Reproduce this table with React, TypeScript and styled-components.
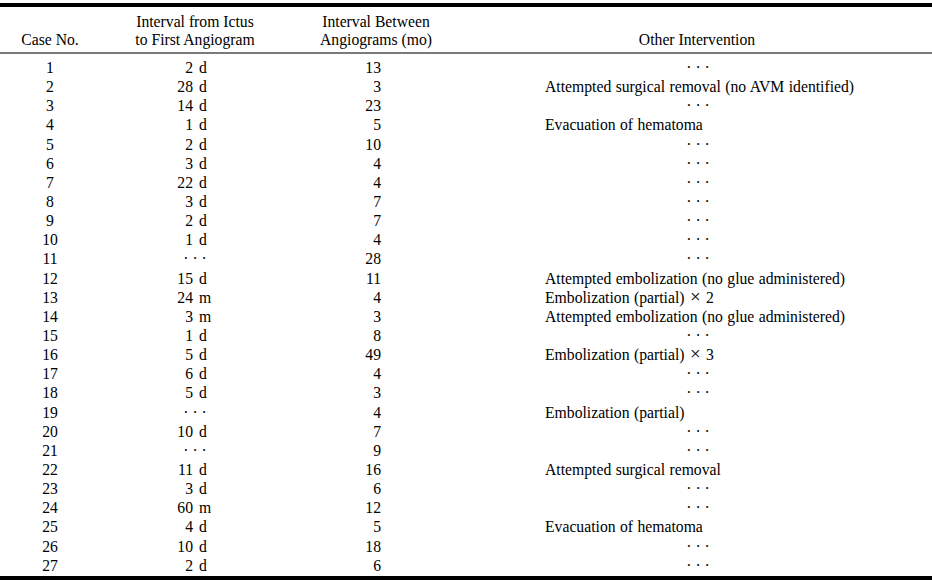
import React from "react";
import styled, { createGlobalStyle } from "styled-components";

const Global = createGlobalStyle`
  html, body { margin: 0; padding: 0; background: #fff; }
  body { font-family: "Liberation Serif", "Times New Roman", serif; color: #000; }
`;

const COLS = "100px 190px 172px 1fr";

const Page = styled.div`
  width: 932px;
  padding-top: 3px;
  font-size: 15.7px;
`;

const ThickRule = styled.div`
  height: 4px;
  background: #000;
`;

const HeadRule = styled.div`
  height: 2px;
  background: #7a7a7a;
`;

const HeaderRow = styled.div`
  display: grid;
  grid-template-columns: ${COLS};
  padding: 6px 0 3px;
  line-height: 18px;
`;

const HeaderCell = styled.div`
  text-align: center;
  align-self: end;
`;

const Body = styled.div`
  padding: 4px 0 1px;
`;

const Row = styled.div`
  display: grid;
  grid-template-columns: ${COLS};
  height: 19.15px;
  line-height: 19.15px;
  white-space: nowrap;
`;

const CaseCell = styled.div`
  text-align: center;
`;

const IntervalCell = styled.div`
  display: grid;
  grid-template-columns: 1fr 1fr;
`;

const IntervalNum = styled.span`
  text-align: right;
  padding-right: 2px;
`;

const IntervalUnit = styled.span`
  text-align: left;
  padding-left: 4px;
`;

const Centered = styled.div<{ $shift?: number }>`
  text-align: center;
  padding-left: ${(p) => p.$shift ?? 0}px;
`;

const MonthsCell = styled.div`
  text-align: right;
  padding-right: 81px;
`;

const InterventionCell = styled.div`
  padding-left: 83px;
  word-spacing: 0.5px;
`;

const Times = styled.span`
  font-size: 19px;
  line-height: 0;
  margin: 0 1px;
`;

const Dots = styled.span`
  letter-spacing: 0;
`;

type RowData = [number, string | null, number, string | null, number?];

const rows: RowData[] = [
  [1, "2 d", 13, null],
  [2, "28 d", 3, "Attempted surgical removal (no AVM identified)"],
  [3, "14 d", 23, null],
  [4, "1 d", 5, "Evacuation of hematoma"],
  [5, "2 d", 10, null],
  [6, "3 d", 4, null],
  [7, "22 d", 4, null],
  [8, "3 d", 7, null],
  [9, "2 d", 7, null],
  [10, "1 d", 4, null],
  [11, null, 28, null],
  [12, "15 d", 11, "Attempted embolization (no glue administered)"],
  [13, "24 m", 4, "Embolization (partial)", 2],
  [14, "3 m", 3, "Attempted embolization (no glue administered)"],
  [15, "1 d", 8, null],
  [16, "5 d", 49, "Embolization (partial)", 3],
  [17, "6 d", 4, null],
  [18, "5 d", 3, null],
  [19, null, 4, "Embolization (partial)"],
  [20, "10 d", 7, null],
  [21, null, 9, null],
  [22, "11 d", 16, "Attempted surgical removal"],
  [23, "3 d", 6, null],
  [24, "60 m", 12, null],
  [25, "4 d", 5, "Evacuation of hematoma"],
  [26, "10 d", 18, null],
  [27, "2 d", 6, null],
];

const DOTS = "\u00b7 \u00b7 \u00b7";

export default function App() {
  return (
    <>
      <Global />
      <Page>
        <ThickRule />
        <HeaderRow>
          <HeaderCell>Case No.</HeaderCell>
          <HeaderCell>
            Interval from Ictus
            <br />
            to First Angiogram
          </HeaderCell>
          <HeaderCell>
            Interval Between
            <br />
            Angiograms (mo)
          </HeaderCell>
          <HeaderCell>Other Intervention</HeaderCell>
        </HeaderRow>
        <HeadRule />
        <Body>
          {rows.map(([no, interval, months, other, times]) => {
            const parts = interval ? interval.split(" ") : null;
            return (
              <Row key={no}>
                <CaseCell>{no}</CaseCell>
                {parts ? (
                  <IntervalCell>
                    <IntervalNum>{parts[0]}</IntervalNum>
                    <IntervalUnit>{parts[1]}</IntervalUnit>
                  </IntervalCell>
                ) : (
                  <Centered>
                    <Dots>{DOTS}</Dots>
                  </Centered>
                )}
                <MonthsCell>{months}</MonthsCell>
                {other ? (
                  <InterventionCell>
                    {other}
                    {times ? (
                      <>
                        {" "}
                        <Times>{"\u00d7"}</Times> {times}
                      </>
                    ) : null}
                  </InterventionCell>
                ) : (
                  <Centered $shift={2}>
                    <Dots>{DOTS}</Dots>
                  </Centered>
                )}
              </Row>
            );
          })}
        </Body>
        <ThickRule />
      </Page>
    </>
  );
}
